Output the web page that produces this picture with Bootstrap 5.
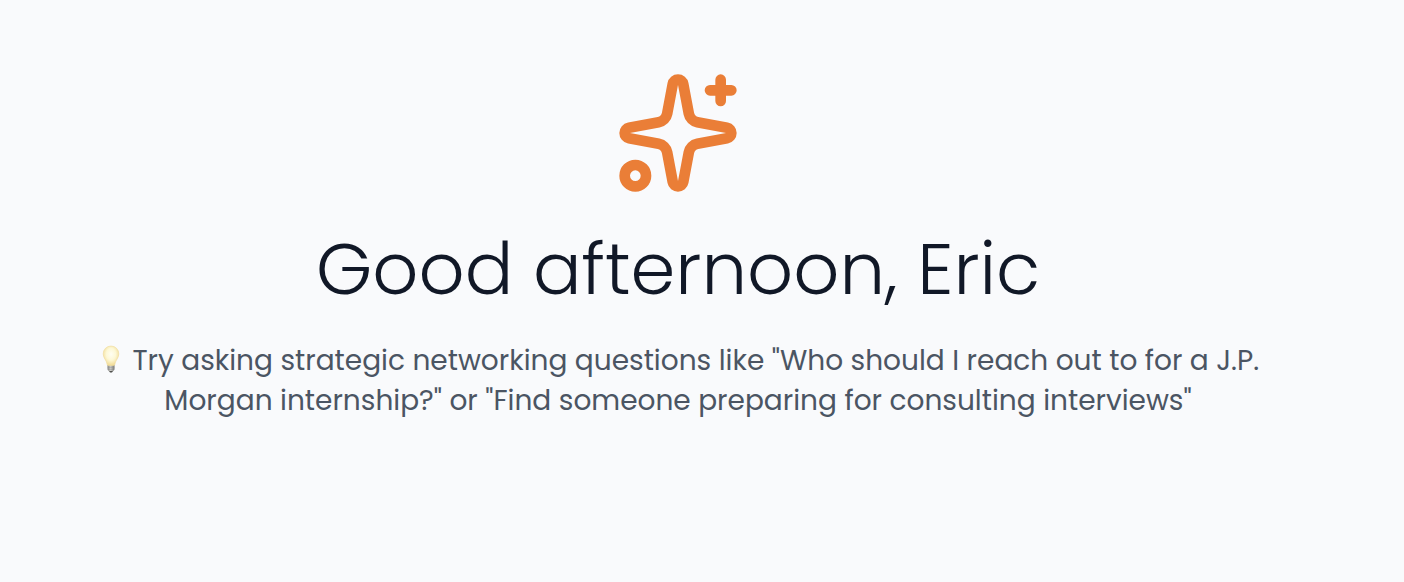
<!DOCTYPE html>
<html lang="en">
<head>
<meta charset="utf-8">
<meta name="viewport" content="width=device-width, initial-scale=1">
<title>Good afternoon</title>
<link href="https://cdn.jsdelivr.net/npm/bootstrap@5.3.0/dist/css/bootstrap.min.css" rel="stylesheet">
<style>
body { background: #f9fafc; font-family: Poppins, "Open Sans", sans-serif; }
.welcome { padding: 69px 88px 48px; margin-right: 48px; }
.spark { width: 128px; height: 128px; color: #ea7e37; }
.greeting { font-size: 72px; line-height: 80px; font-weight: 300; color: #111827; margin-top: 32px; }
.hint { font-size: 28px; line-height: 40px; color: #4b5563; margin-top: 32px; }
.bulb { width: 28px; height: 28px; vertical-align: -3px; }
</style>
</head>
<body>
<main class="welcome text-center">
  <svg class="spark d-block mx-auto" viewBox="0 0 24 24" fill="none" stroke="currentColor" stroke-width="2" stroke-linecap="round" stroke-linejoin="round" aria-hidden="true">
    <path d="M11.017 2.814a1 1 0 0 1 1.966 0l1.051 5.558a2 2 0 0 0 1.594 1.594l5.558 1.051a1 1 0 0 1 0 1.966l-5.558 1.051a2 2 0 0 0-1.594 1.594l-1.051 5.558a1 1 0 0 1-1.966 0l-1.051-5.558a2 2 0 0 0-1.594-1.594l-5.558-1.051a1 1 0 0 1 0-1.966l5.558-1.051a2 2 0 0 0 1.594-1.594z"/>
    <path d="M20 2v4M22 4h-4"/>
    <circle cx="4" cy="20" r="2"/>
  </svg>
  <h1 class="greeting mb-0">Good afternoon, Eric</h1>
  <p class="hint mb-0"><svg class="bulb" viewBox="1 0 28 28" role="img" aria-label="Light bulb">
    <defs>
      <radialGradient id="glass" cx=".5" cy=".42" r=".6"><stop offset="0" stop-color="#fffef2"/><stop offset=".5" stop-color="#fdf8d6"/><stop offset="1" stop-color="#f0d890"/></radialGradient>
      <linearGradient id="metal"><stop offset="0" stop-color="#858582"/><stop offset=".45" stop-color="#d2d2ce"/><stop offset="1" stop-color="#747472"/></linearGradient>
    </defs>
    <path d="M11.500 20h7v4.300q0 1-1 1.400l-1 1.300h-3l-1-1.300q-1-.4-1-1.400z" fill="url(#metal)"/>
    <path d="M11.700 22.300h6.600M12 24.300h6" stroke="#888" stroke-width=".5"/>
    <path d="M13.300 26h3.400l-.7 1.500h-2z" fill="#50504e"/>
    <path d="M15 1a7.800 7.800 0 0 0-7.800 7.900c0 4.300 3.300 6 3.900 10.400q.2 1.200 1.200 1.200h5.400q1 0 1.200-1.200c.6-4.400 3.900-6.100 3.900-10.400A7.800 7.800 0 0 0 15 1z" fill="url(#glass)" stroke="#f0dc9c" stroke-width=".6"/>
  </svg> Try asking strategic networking questions like "Who should I reach out to for a J.P. Morgan internship?" or "Find someone preparing for consulting interviews"</p>
</main>
<script src="https://cdn.jsdelivr.net/npm/bootstrap@5.3.0/dist/js/bootstrap.bundle.min.js"></script>
</body>
</html>
